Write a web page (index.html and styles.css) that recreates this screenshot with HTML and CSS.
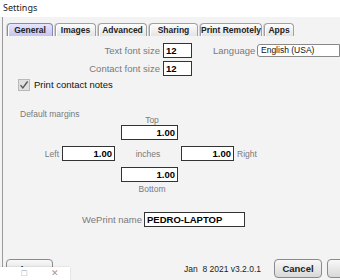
FILE: index.html
```html
<!DOCTYPE html>
<html lang="en">
<head>
    <meta charset="UTF-8">
    <title>Settings</title>
    <link rel="stylesheet" href="styles.css">
</head>
<body>

<div class="titlebar">Settings</div>

<div class="window">
    <ul class="tab-menu">
        <li class="tab-item is-selected tab-general">General</li>
        <li class="tab-item tab-images">Images</li>
        <li class="tab-item tab-advanced">Advanced</li>
        <li class="tab-item tab-sharing">Sharing</li>
        <li class="tab-item tab-remote">Print Remotely</li>
        <li class="tab-item tab-apps">Apps</li>
    </ul>

    <div class="form">
        <div class="row row-font">
            <span class="label label-font">Text font size</span>
            <span class="field field-small">12</span>
            <span class="label label-lang">Language</span>
            <span class="select">English (USA)</span>
        </div>
        <div class="row row-contact">
            <span class="label label-font">Contact font size</span>
            <span class="field field-small">12</span>
        </div>
        <div class="row row-check">
            <span class="checkbox">
                <svg width="10" height="10" viewBox="0 0 10 10"><path d="M1.5 5.2 L3.8 8 L8.6 1.5" fill="none" stroke="#555" stroke-width="1.3"/></svg>
            </span>
            <span class="check-label">Print contact notes</span>
        </div>

        <div class="margins-title">Default margins</div>

        <div class="margins">
            <span class="label caption caption-top">Top</span>
            <div class="center-col"><span class="field field-num">1.00</span></div>
            <div class="row row-middle">
                <span class="label label-left">Left</span>
                <span class="field field-num field-side">1.00</span>
                <span class="label label-inches">inches</span>
                <span class="field field-num field-side">1.00</span>
                <span class="label label-right">Right</span>
            </div>
            <div class="center-col center-bottom"><span class="field field-num">1.00</span></div>
            <span class="label caption caption-bottom">Bottom</span>
        </div>

        <div class="row row-name">
            <span class="label label-name">WePrint name</span>
            <span class="field field-name">PEDRO-LAPTOP</span>
        </div>
    </div>

    <div class="footer">
        <span class="button button-log">Log</span>
        <span class="version">Jan&nbsp; 8 2021 v3.2.0.1</span>
        <span class="button button-cancel">Cancel</span>
        <span class="button button-save">Save</span>
    </div>
</div>

<div class="popup">
    <span class="popup-icon">&#9633;</span>
    <span class="popup-icon">&#10005;</span>
</div>

</body>
</html>
```

FILE: styles.css
```css
* {
    margin: 0;
    padding: 0;
    box-sizing: border-box;
}
body {
    font-family: "Liberation Sans", Arial, sans-serif;
    width: 340px;
    height: 280px;
    overflow: hidden;
    position: relative;
    background: #f3f3f3;
}
ul {
    list-style: none;
}

.titlebar {
    height: 17px;
    background: #fff;
    font-family: "Noto Sans", sans-serif;
    font-size: 9px;
    line-height: 15px;
    padding-left: 3px;
    color: #222;
}

.window {
    height: 263px;
    border-left: 1px solid #9a9a9a;
    margin-left: 2px;
    padding-top: 6px;
    background: #f3f3f3;
}

/* tabs */
.tab-menu {
    display: flex;
    padding-left: 4px;
    height: 13px;
}
.tab-item {
    height: 13px;
    margin-right: 2px;
    font-size: 8.5px;
    font-weight: bold;
    line-height: 12px;
    text-align: center;
    white-space: nowrap;
    color: #222;
    border: 1px solid #a0a0a0;
    border-bottom: 0;
    border-radius: 4px 4px 0 0;
    background: linear-gradient(#fdfdfd, #e4e4e4);
    box-shadow: inset 1px 0 0 #fff, -1px 0 0 #cfcfcf;
}
.tab-item.is-selected {
    background: linear-gradient(#e6e6ff, #c4c4f2);
    border-color: #8888b0;
}
.tab-general { width: 46px; }
.tab-images { width: 41px; }
.tab-advanced { width: 49px; }
.tab-sharing { width: 49px; }
.tab-remote { width: 62px; }
.tab-apps { width: 30px; }

/* form */
.form {
    padding-top: 7px;
    font-size: 9.5px;
    line-height: 12px;
}
.row {
    display: flex;
    align-items: center;
}
.label {
    color: #7a7a7a;
    white-space: nowrap;
}
.field {
    display: block;
    height: 15px;
    border: 1px solid #333;
    background: #fff;
    font-weight: bold;
    font-size: 9.5px;
    line-height: 13px;
    padding: 0 2px;
    color: #000;
}
.label-font {
    width: 157px;
    text-align: right;
    margin-right: 3px;
}
.field-small {
    width: 29px;
}
.row-contact {
    margin-top: 3px;
}
.label-lang {
    margin-left: 21px;
    width: 44px;
}
.select {
    flex: 1;
    height: 13px;
    border: 1px solid #888;
    border-radius: 3px 0 0 3px;
    background: #fff;
    font-size: 8.5px;
    line-height: 11px;
    padding-left: 3px;
    color: #111;
}

.row-check {
    margin-top: 3px;
    padding-left: 15px;
}
.checkbox {
    width: 12px;
    height: 12px;
    border: 1px solid #b8b8b8;
    background: #e0e0e0;
    display: flex;
    align-items: center;
    justify-content: center;
}
.check-label {
    margin-left: 4px;
    font-size: 9.5px;
    color: #111;
}

.margins-title {
    margin-top: 18px;
    padding-left: 17px;
    color: #7a7a7a;
    font-size: 8.5px;
    line-height: 10px;
}

.margins {
    display: flex;
    flex-direction: column;
    width: 260px;
}
.caption {
    align-self: center;
    font-size: 8.5px;
    line-height: 10px;
}
.caption-top {
    padding-left: 38px;
    margin-top: -4px;
}
.caption-bottom {
    padding-left: 38px;
    margin-top: 2px;
}
.center-col {
    padding-left: 118px;
}
.center-bottom {
    margin-top: 6px;
}
.field-num {
    width: 57px;
    text-align: right;
}
.row-middle {
    margin-top: 6px;
    height: 15px;
}
.label-left {
    width: 56px;
    text-align: right;
    margin-right: 3px;
    font-size: 8.5px;
}
.field-side {
    width: 53px;
}
.label-inches {
    width: 66px;
    text-align: center;
    font-size: 8.5px;
}
.label-right {
    margin-left: 3px;
    font-size: 8.5px;
}

.row-name {
    margin-top: 18px;
}
.label-name {
    width: 139px;
    text-align: right;
    margin-right: 2px;
}
.field-name {
    width: 101px;
    text-align: left;
}

/* footer */
.footer {
    display: flex;
    align-items: center;
    margin-top: 32px;
    padding-left: 3px;
}
.button {
    height: 19px;
    border: 1px solid #8a8a8a;
    border-radius: 4px;
    background: linear-gradient(#f8f8f8, #d8d8d8);
    font-size: 9.5px;
    font-weight: bold;
    line-height: 17px;
    text-align: center;
    color: #222;
    flex-shrink: 0;
}
.button-log {
    width: 47px;
}
.version {
    margin-left: auto;
    margin-right: 13px;
    font-size: 8.5px;
    color: #222;
}
.button-cancel {
    width: 48px;
}
.button-save {
    width: 48px;
    margin-left: 5px;
    margin-right: -35px;
}

.popup {
    position: absolute;
    left: 0;
    top: 267px;
    width: 70px;
    height: 13px;
    background: #fff;
    box-shadow: 0 0 2px rgba(0, 0, 0, 0.15);
    display: flex;
    justify-content: flex-end;
    gap: 24px;
    padding-right: 11px;
    font-size: 9px;
    line-height: 13px;
    color: #999;
}
```
